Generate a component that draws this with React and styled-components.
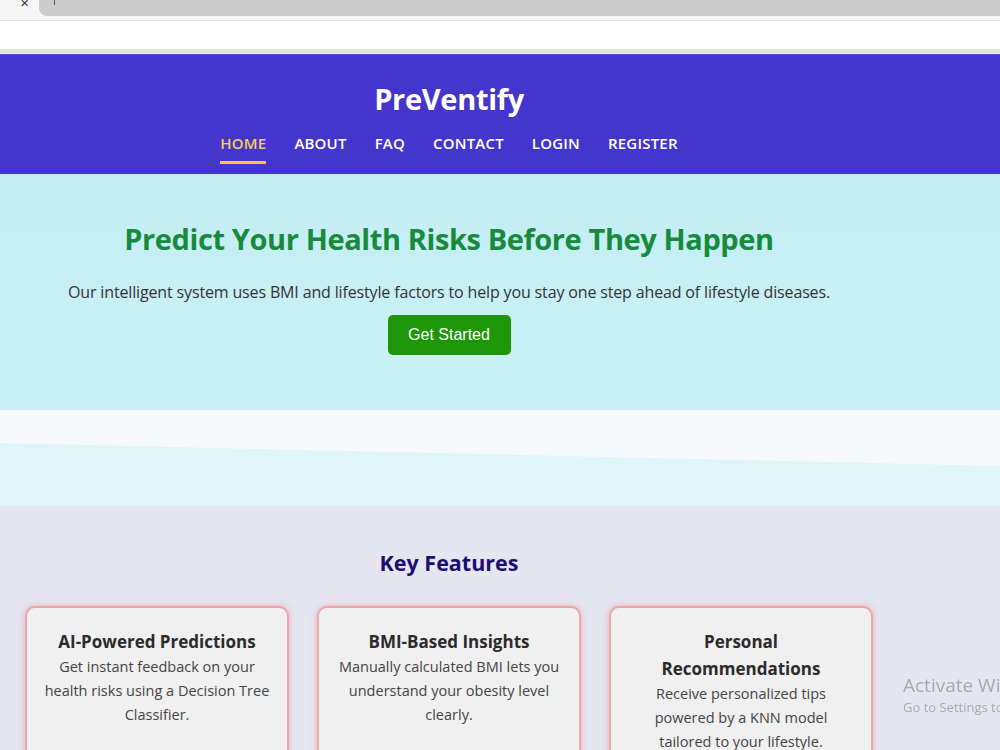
import React from 'react';
import styled, { createGlobalStyle } from 'styled-components';

const GlobalStyle = createGlobalStyle`
  body {
    margin: 0;
    font-family: "Open Sans", "Noto Sans", sans-serif;
    background: #e6e6f0;
    overflow: hidden;
  }
`;

const features = [
  {
    title: 'AI-Powered Predictions',
    text: 'Get instant feedback on your health risks using a Decision Tree Classifier.',
  },
  {
    title: 'BMI-Based Insights',
    text: 'Manually calculated BMI lets you understand your obesity level clearly.',
  },
  {
    title: 'Personal Recommendations',
    text: 'Receive personalized tips powered by a KNN model tailored to your lifestyle.',
  },
];

const navLinks = ['Home', 'About', 'FAQ', 'Contact', 'Login', 'Register'];

/* browser chrome strip above the page */
const Chrome = styled.div`
  background: #f7f7f7;
`;

const TabStrip = styled.div`
  display: flex;
  height: 16px;
`;

const Tab = styled.div`
  width: 39px;
  display: flex;
  justify-content: flex-end;
  padding-right: 10px;
  box-sizing: border-box;
  font-family: "Liberation Sans", sans-serif;
  font-size: 15px;
  line-height: 6px;
  color: #333;
`;

const TabBar = styled.div`
  flex: 1;
  background: #cccccc;
  border-bottom-left-radius: 8px;
  padding-left: 15px;
  display: flex;
`;

const Caret = styled.span`
  width: 1px;
  height: 5px;
  background: #555;
`;

const AddressRow = styled.div`
  height: 28px;
  margin-top: 4px;
  background: #fff;
  border-top: 1px solid #e2e2e2;
  border-bottom: 3px solid #e4e4e4;
  margin-bottom: 2px;
`;

const Inner = styled.div`
  width: 898px;
  display: flex;
  flex-direction: column;
  align-items: center;
`;

const Header = styled.header`
  background: #4435cc;
  height: 120px;
  border-top: 1px solid #5a4ed6;
  box-sizing: border-box;
`;

const Brand = styled.h1`
  margin: 0;
  padding-top: 23px;
  color: #fff;
  font-size: 29px;
  font-weight: 700;
  line-height: 42px;
  letter-spacing: -0.3px;
`;

const Nav = styled.nav`
  display: flex;
  gap: 28px;
  margin-top: 13px;
`;

const NavLink = styled.a`
  color: ${({ $active }) => ($active ? '#f6d155' : '#fff')};
  font-size: 15px;
  font-weight: 600;
  text-transform: uppercase;
  letter-spacing: 0.2px;
  line-height: 20px;
  padding-bottom: 8px;
  border-bottom: 3px solid ${({ $active }) => ($active ? '#f6c93c' : 'transparent')};
  text-decoration: none;
`;

const Hero = styled.section`
  height: 236px;
  background: linear-gradient(180deg, #c4eef4, #caf1f6);
`;

const HeroTitle = styled.h2`
  margin: 0;
  padding-top: 43px;
  color: #178a3c;
  font-size: 29px;
  font-weight: 700;
  line-height: 44px;
  letter-spacing: -0.4px;
`;

const HeroText = styled.p`
  margin: 21px 0 0;
  color: #333;
  font-size: 16px;
  line-height: 20px;
  letter-spacing: -0.15px;
`;

const StartButton = styled.button`
  margin-top: 13px;
  width: 123px;
  height: 40px;
  border: none;
  border-radius: 5px;
  background: #1f9607;
  color: #fff;
  font-family: "Liberation Sans", Arial, sans-serif;
  font-size: 16px;
  cursor: pointer;
`;

const Wave = styled.svg`
  display: block;
  width: 100%;
  height: 96px;
`;

const Features = styled.section`
  padding-top: 43px;
`;

const FeaturesTitle = styled.h2`
  margin: 0;
  color: #1b0e72;
  font-size: 21.5px;
  font-weight: 700;
  line-height: 28px;
`;

const CardRow = styled.div`
  display: flex;
  gap: 28px;
  margin-top: 29px;
`;

const Card = styled.div`
  width: 264px;
  height: 200px;
  box-sizing: border-box;
  padding: 20px 17px;
  background: #f0f0f0;
  border: 2px solid #eaa6aa;
  border-radius: 10px;
  box-shadow: 0 0 6px rgba(230, 120, 130, 0.55);
  text-align: center;
`;

const CardTitle = styled.h3`
  margin: 0;
  color: #2b2b2b;
  font-size: 17px;
  font-weight: 700;
  line-height: 27px;
`;

const CardText = styled.p`
  margin: 0;
  color: #444;
  font-size: 14.5px;
  line-height: 24px;
`;

const Watermark = styled.div`
  position: fixed;
  left: 903px;
  top: 673px;
  color: rgba(90, 90, 100, 0.45);
  white-space: nowrap;
`;

const WatermarkTitle = styled.div`
  font-size: 19px;
  line-height: 24px;
`;

const WatermarkText = styled.div`
  font-size: 13px;
  line-height: 20px;
`;

export default function App() {
  return (
    <>
      <GlobalStyle />
      <Chrome>
        <TabStrip>
          <Tab>×</Tab>
          <TabBar>
            <Caret />
          </TabBar>
        </TabStrip>
        <AddressRow />
      </Chrome>

      <Header>
        <Inner>
          <Brand>PreVentify</Brand>
          <Nav>
            {navLinks.map((link, i) => (
              <NavLink key={link} href="#" $active={i === 0}>
                {link}
              </NavLink>
            ))}
          </Nav>
        </Inner>
      </Header>

      <Hero>
        <Inner>
          <HeroTitle>Predict Your Health Risks Before They Happen</HeroTitle>
          <HeroText>
            Our intelligent system uses BMI and lifestyle factors to help you stay one step ahead of lifestyle diseases.
          </HeroText>
          <StartButton>Get Started</StartButton>
        </Inner>
      </Hero>

      <Wave viewBox="0 0 1000 96" preserveAspectRatio="none">
        <rect width="1000" height="96" fill="#f7f9fa" />
        <polygon points="0,33 1000,56 1000,96 0,96" fill="#dff6f8" />
      </Wave>

      <Features>
        <Inner>
          <FeaturesTitle>Key Features</FeaturesTitle>
          <CardRow>
            {features.map((f) => (
              <Card key={f.title}>
                <CardTitle>{f.title}</CardTitle>
                <CardText>{f.text}</CardText>
              </Card>
            ))}
          </CardRow>
        </Inner>
      </Features>

      <Watermark>
        <WatermarkTitle>Activate Windows</WatermarkTitle>
        <WatermarkText>Go to Settings to activate Windows.</WatermarkText>
      </Watermark>
    </>
  );
}
